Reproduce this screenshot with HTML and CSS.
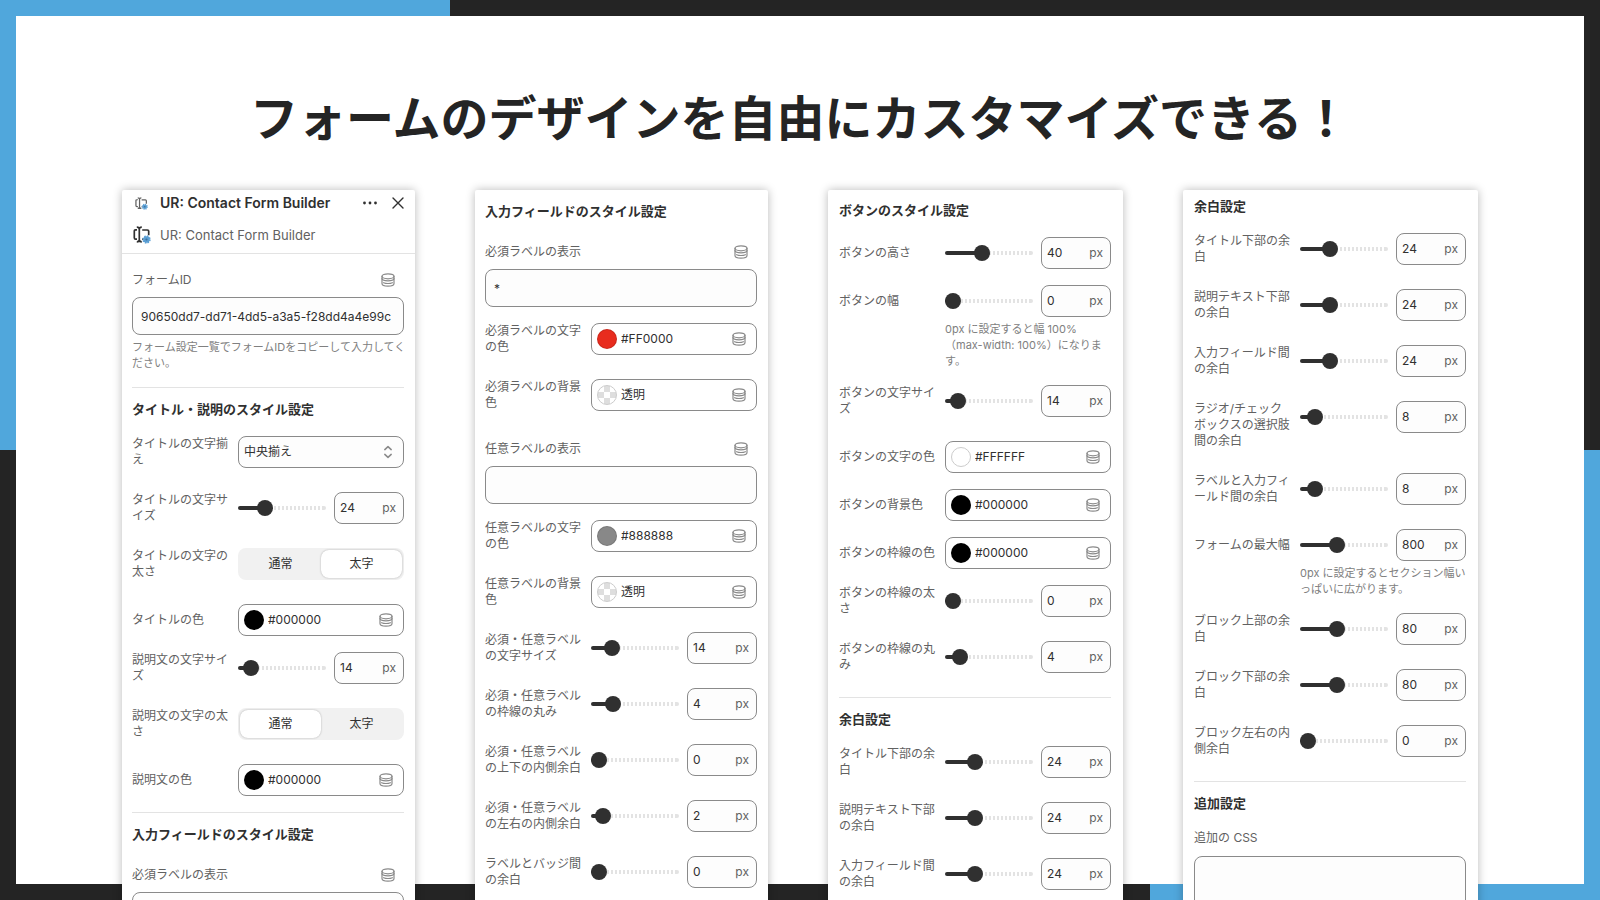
FILE: index.html
```html
<!DOCTYPE html>
<html lang="ja">
<head>
<meta charset="utf-8">
<meta name="viewport" content="width=device-width, initial-scale=1">
<title>フォームのデザインを自由にカスタマイズできる！</title>
<link rel="stylesheet" href="styles.css">
</head>
<body>
<svg class="sprite" aria-hidden="true">
  <symbol id="i-db" viewBox="0 0 16 16">
    <g fill="none" stroke="currentColor" stroke-width="1.2" stroke-linecap="round">
      <ellipse cx="8" cy="4.300" rx="6" ry="2.500"/>
      <path d="M2 4.300v7.200c0 1.700 2.400 2.700 6 2.700s6-1 6-2.700V4.300"/>
      <path d="M2 6.600c.3 1.400 2.600 2.200 6 2.200s5.700-.8 6-2.200"/>
      <path d="M3.600 10.700c1.100.5 2.600.8 4.400.8s3.300-.3 4.400-.8"/>
    </g>
  </symbol>
  <symbol id="i-app" viewBox="0 0 18 18">
    <g fill="none" stroke="currentColor" stroke-width="1.700">
      <path d="M4 3.800H2.600Q1.300 3.800 1.300 5.200v6.600Q1.300 13.200 2.600 13.200H4"/>
      <path d="M3.800 1.200Q6.300 1.200 6.300 3.200Q6.300 1.200 8.800 1.200M6.300 3v11M3.800 15.800Q6.300 15.800 6.300 13.800Q6.300 15.800 8.800 15.800"/>
      <path d="M9.200 4h5.200q1.300 0 1.300 1.300v4M9.200 13.200h1.300"/>
    </g>
    <circle cx="13.500" cy="13.500" r="3.200" fill="#5b9fd4"/>
    <circle cx="13.500" cy="13.500" r="3.400" fill="none" stroke="#5b9fd4" stroke-width="1.600" stroke-dasharray="1.500 1.170"/>
    <circle cx="13.500" cy="13.500" r="1.100" fill="#3c6f9c"/>
  </symbol>
  <symbol id="i-updown" viewBox="0 0 10 14">
    <path d="M1.800 4.600 5 1.600l3.200 3M1.800 9.400 5 12.400l3.200-3" fill="none" stroke="currentColor" stroke-width="1.500" stroke-linecap="round" stroke-linejoin="round"/>
  </symbol>
  <symbol id="i-dots" viewBox="0 0 16 4">
    <g fill="currentColor"><circle cx="2.500" cy="2" r="1.400"/><circle cx="8" cy="2" r="1.400"/><circle cx="13.500" cy="2" r="1.400"/></g>
  </symbol>
  <symbol id="i-close" viewBox="0 0 12 12">
    <path d="M1 1l10 10M11 1 1 11" fill="none" stroke="currentColor" stroke-width="1.400" stroke-linecap="round"/>
  </symbol>
</svg>

<main class="slide">
  <h1 class="slide__title">フォームのデザインを自由にカスタマイズできる！</h1>
  <div class="panels">

    <article class="panel panel--app">
      <header class="app">
        <div class="app__bar">
          <svg class="app__icon app__icon--small"><use href="#i-app"/></svg>
          <h2 class="app__name">UR: Contact Form Builder</h2>
          <button class="icon-btn" type="button" aria-label="その他"><svg class="icon-dots"><use href="#i-dots"/></svg></button>
          <button class="icon-btn" type="button" aria-label="閉じる"><svg class="icon-close"><use href="#i-close"/></svg></button>
        </div>
        <div class="app__sub">
          <svg class="app__icon"><use href="#i-app"/></svg>
          <span>UR: Contact Form Builder</span>
        </div>
      </header>
      <section class="section">
        <div class="field">
          <div class="field__head"><label for="form-id">フォームID</label><button class="icon-btn" type="button" aria-label="動的ソース"><svg class="icon-db"><use href="#i-db"/></svg></button></div>
          <input class="text-input" id="form-id" type="text" value="90650dd7-dd71-4dd5-a3a5-f28dd4a4e99c">
          <p class="help help--wide">フォーム設定一覧でフォームIDをコピーして入力してください。</p>
        </div>
      </section>
      <section class="section">
        <h3 class="section__title">タイトル・説明のスタイル設定</h3>
        <div class="row">
          <label class="row__label row__label--multi" for="t-align">タイトルの文字揃え</label>
          <div class="select"><select id="t-align"><option>中央揃え</option></select><svg class="icon-updown"><use href="#i-updown"/></svg></div>
        </div>
        <div class="row">
          <label class="row__label row__label--multi" for="t-size">タイトルの文字サイズ</label>
          <div class="range"><input class="slider" type="range" aria-label="タイトルの文字サイズ" min="8" max="68" value="24" style="--fill:.267"><span class="number"><input id="t-size" type="number" value="24"><span>px</span></span></div>
        </div>
        <div class="row">
          <span class="row__label row__label--multi" id="t-weight">タイトルの文字の太さ</span>
          <div class="segment" role="radiogroup" aria-labelledby="t-weight">
            <label><input type="radio" name="tw"><span>通常</span></label>
            <label><input type="radio" name="tw" checked><span>太字</span></label>
          </div>
        </div>
        <div class="row">
          <label class="row__label" for="t-color">タイトルの色</label>
          <div class="color"><button class="swatch swatch--black" type="button" aria-label="色を選択"></button><input id="t-color" type="text" value="#000000"><svg class="icon-db"><use href="#i-db"/></svg></div>
        </div>
        <div class="row">
          <label class="row__label row__label--multi" for="d-size">説明文の文字サイズ</label>
          <div class="range"><input class="slider" type="range" aria-label="説明文の文字サイズ" min="10" max="66" value="14" style="--fill:.071"><span class="number"><input id="d-size" type="number" value="14"><span>px</span></span></div>
        </div>
        <div class="row">
          <span class="row__label row__label--multi" id="d-weight">説明文の文字の太さ</span>
          <div class="segment" role="radiogroup" aria-labelledby="d-weight">
            <label><input type="radio" name="dw" checked><span>通常</span></label>
            <label><input type="radio" name="dw"><span>太字</span></label>
          </div>
        </div>
        <div class="row">
          <label class="row__label" for="d-color">説明文の色</label>
          <div class="color"><button class="swatch swatch--black" type="button" aria-label="色を選択"></button><input id="d-color" type="text" value="#000000"><svg class="icon-db"><use href="#i-db"/></svg></div>
        </div>
      </section>
      <section class="section">
        <h3 class="section__title">入力フィールドのスタイル設定</h3>
        <div class="field">
          <div class="field__head"><label for="req-a">必須ラベルの表示</label><button class="icon-btn" type="button" aria-label="動的ソース"><svg class="icon-db"><use href="#i-db"/></svg></button></div>
          <input class="text-input" id="req-a" type="text">
        </div>
      </section>
    </article>

    <article class="panel panel--fields">
      <section class="section">
        <h3 class="section__title">入力フィールドのスタイル設定</h3>
        <div class="field">
          <div class="field__head"><label for="req">必須ラベルの表示</label><button class="icon-btn" type="button" aria-label="動的ソース"><svg class="icon-db"><use href="#i-db"/></svg></button></div>
          <input class="text-input" id="req" type="text" value="*">
        </div>
        <div class="row">
          <label class="row__label row__label--multi" for="req-color">必須ラベルの文字の色</label>
          <div class="color"><button class="swatch swatch--red" type="button" aria-label="色を選択"></button><input id="req-color" type="text" value="#FF0000"><svg class="icon-db"><use href="#i-db"/></svg></div>
        </div>
        <div class="row">
          <label class="row__label row__label--multi" for="req-bg">必須ラベルの背景色</label>
          <div class="color"><button class="swatch swatch--clear" type="button" aria-label="色を選択"></button><input id="req-bg" type="text" value="透明"><svg class="icon-db"><use href="#i-db"/></svg></div>
        </div>
        <div class="field">
          <div class="field__head"><label for="opt">任意ラベルの表示</label><button class="icon-btn" type="button" aria-label="動的ソース"><svg class="icon-db"><use href="#i-db"/></svg></button></div>
          <input class="text-input" id="opt" type="text">
        </div>
        <div class="row">
          <label class="row__label row__label--multi" for="opt-color">任意ラベルの文字の色</label>
          <div class="color"><button class="swatch swatch--gray" type="button" aria-label="色を選択"></button><input id="opt-color" type="text" value="#888888"><svg class="icon-db"><use href="#i-db"/></svg></div>
        </div>
        <div class="row">
          <label class="row__label row__label--multi" for="opt-bg">任意ラベルの背景色</label>
          <div class="color"><button class="swatch swatch--clear" type="button" aria-label="色を選択"></button><input id="opt-bg" type="text" value="透明"><svg class="icon-db"><use href="#i-db"/></svg></div>
        </div>
        <div class="row">
          <label class="row__label row__label--multi" for="l-size">必須・任意ラベルの文字サイズ</label>
          <div class="range"><input class="slider" type="range" aria-label="必須・任意ラベルの文字サイズ" min="10" max="32" value="14" style="--fill:.182"><span class="number"><input id="l-size" type="number" value="14"><span>px</span></span></div>
        </div>
        <div class="row">
          <label class="row__label row__label--multi" for="l-radius">必須・任意ラベルの枠線の丸み</label>
          <div class="range"><input class="slider" type="range" aria-label="必須・任意ラベルの枠線の丸み" min="0" max="20" value="4" style="--fill:.2"><span class="number"><input id="l-radius" type="number" value="4"><span>px</span></span></div>
        </div>
        <div class="row">
          <label class="row__label row__label--multi" for="l-py">必須・任意ラベルの上下の内側余白</label>
          <div class="range"><input class="slider" type="range" aria-label="必須・任意ラベルの上下の内側余白" min="0" max="40" value="0" style="--fill:0"><span class="number"><input id="l-py" type="number" value="0"><span>px</span></span></div>
        </div>
        <div class="row">
          <label class="row__label row__label--multi" for="l-px">必須・任意ラベルの左右の内側余白</label>
          <div class="range"><input class="slider" type="range" aria-label="必須・任意ラベルの左右の内側余白" min="0" max="40" value="2" style="--fill:.05"><span class="number"><input id="l-px" type="number" value="2"><span>px</span></span></div>
        </div>
        <div class="row">
          <label class="row__label row__label--multi" for="l-gap">ラベルとバッジ間の余白</label>
          <div class="range"><input class="slider" type="range" aria-label="ラベルとバッジ間の余白" min="0" max="40" value="0" style="--fill:0"><span class="number"><input id="l-gap" type="number" value="0"><span>px</span></span></div>
        </div>
      </section>
    </article>

    <article class="panel panel--button">
      <section class="section">
        <h3 class="section__title">ボタンのスタイル設定</h3>
        <div class="row">
          <label class="row__label" for="b-h">ボタンの高さ</label>
          <div class="range"><input class="slider" type="range" aria-label="ボタンの高さ" min="0" max="100" value="40" style="--fill:.4"><span class="number"><input id="b-h" type="number" value="40"><span>px</span></span></div>
        </div>
        <div class="row">
          <label class="row__label" for="b-w">ボタンの幅</label>
          <div class="control">
            <div class="range"><input class="slider" type="range" aria-label="ボタンの幅" min="0" max="800" value="0" style="--fill:0"><span class="number"><input id="b-w" type="number" value="0"><span>px</span></span></div>
            <p class="help">0px に設定すると幅 100%（max-width: 100%）になります。</p>
          </div>
        </div>
        <div class="row">
          <label class="row__label row__label--multi" for="b-size">ボタンの文字サイズ</label>
          <div class="range"><input class="slider" type="range" aria-label="ボタンの文字サイズ" min="10" max="66" value="14" style="--fill:.071"><span class="number"><input id="b-size" type="number" value="14"><span>px</span></span></div>
        </div>
        <div class="row">
          <label class="row__label" for="b-color">ボタンの文字の色</label>
          <div class="color"><button class="swatch swatch--white" type="button" aria-label="色を選択"></button><input id="b-color" type="text" value="#FFFFFF"><svg class="icon-db"><use href="#i-db"/></svg></div>
        </div>
        <div class="row">
          <label class="row__label" for="b-bg">ボタンの背景色</label>
          <div class="color"><button class="swatch swatch--black" type="button" aria-label="色を選択"></button><input id="b-bg" type="text" value="#000000"><svg class="icon-db"><use href="#i-db"/></svg></div>
        </div>
        <div class="row">
          <label class="row__label" for="b-bc">ボタンの枠線の色</label>
          <div class="color"><button class="swatch swatch--black" type="button" aria-label="色を選択"></button><input id="b-bc" type="text" value="#000000"><svg class="icon-db"><use href="#i-db"/></svg></div>
        </div>
        <div class="row">
          <label class="row__label row__label--multi" for="b-bw">ボタンの枠線の太さ</label>
          <div class="range"><input class="slider" type="range" aria-label="ボタンの枠線の太さ" min="0" max="20" value="0" style="--fill:0"><span class="number"><input id="b-bw" type="number" value="0"><span>px</span></span></div>
        </div>
        <div class="row">
          <label class="row__label row__label--multi" for="b-r">ボタンの枠線の丸み</label>
          <div class="range"><input class="slider" type="range" aria-label="ボタンの枠線の丸み" min="0" max="40" value="4" style="--fill:.1"><span class="number"><input id="b-r" type="number" value="4"><span>px</span></span></div>
        </div>
      </section>
      <section class="section">
        <h3 class="section__title">余白設定</h3>
        <div class="row">
          <label class="row__label row__label--multi" for="m1">タイトル下部の余白</label>
          <div class="range"><input class="slider" type="range" aria-label="タイトル下部の余白" min="0" max="80" value="24" style="--fill:.3"><span class="number"><input id="m1" type="number" value="24"><span>px</span></span></div>
        </div>
        <div class="row">
          <label class="row__label row__label--multi" for="m2">説明テキスト下部の余白</label>
          <div class="range"><input class="slider" type="range" aria-label="説明テキスト下部の余白" min="0" max="80" value="24" style="--fill:.3"><span class="number"><input id="m2" type="number" value="24"><span>px</span></span></div>
        </div>
        <div class="row">
          <label class="row__label row__label--multi" for="m3">入力フィールド間の余白</label>
          <div class="range"><input class="slider" type="range" aria-label="入力フィールド間の余白" min="0" max="80" value="24" style="--fill:.3"><span class="number"><input id="m3" type="number" value="24"><span>px</span></span></div>
        </div>
      </section>
    </article>

    <article class="panel panel--spacing">
      <section class="section">
        <h3 class="section__title">余白設定</h3>
        <div class="row">
          <label class="row__label row__label--multi" for="s1">タイトル下部の余白</label>
          <div class="range"><input class="slider" type="range" aria-label="タイトル下部の余白" min="0" max="80" value="24" style="--fill:.3"><span class="number"><input id="s1" type="number" value="24"><span>px</span></span></div>
        </div>
        <div class="row">
          <label class="row__label row__label--multi" for="s2">説明テキスト下部の余白</label>
          <div class="range"><input class="slider" type="range" aria-label="説明テキスト下部の余白" min="0" max="80" value="24" style="--fill:.3"><span class="number"><input id="s2" type="number" value="24"><span>px</span></span></div>
        </div>
        <div class="row">
          <label class="row__label row__label--multi" for="s3">入力フィールド間の余白</label>
          <div class="range"><input class="slider" type="range" aria-label="入力フィールド間の余白" min="0" max="80" value="24" style="--fill:.3"><span class="number"><input id="s3" type="number" value="24"><span>px</span></span></div>
        </div>
        <div class="row">
          <label class="row__label row__label--multi" for="s4">ラジオ/チェックボックスの選択肢間の余白</label>
          <div class="range"><input class="slider" type="range" aria-label="ラジオ/チェックボックスの選択肢間の余白" min="0" max="80" value="8" style="--fill:.1"><span class="number"><input id="s4" type="number" value="8"><span>px</span></span></div>
        </div>
        <div class="row">
          <label class="row__label row__label--multi" for="s5">ラベルと入力フィールド間の余白</label>
          <div class="range"><input class="slider" type="range" aria-label="ラベルと入力フィールド間の余白" min="0" max="80" value="8" style="--fill:.1"><span class="number"><input id="s5" type="number" value="8"><span>px</span></span></div>
        </div>
        <div class="row">
          <label class="row__label" for="s6">フォームの最大幅</label>
          <div class="control">
            <div class="range"><input class="slider" type="range" aria-label="フォームの最大幅" min="0" max="2000" value="800" style="--fill:.4"><span class="number"><input id="s6" type="number" value="800"><span>px</span></span></div>
            <p class="help">0px に設定するとセクション幅いっぱいに広がります。</p>
          </div>
        </div>
        <div class="row">
          <label class="row__label row__label--multi" for="s7">ブロック上部の余白</label>
          <div class="range"><input class="slider" type="range" aria-label="ブロック上部の余白" min="0" max="200" value="80" style="--fill:.4"><span class="number"><input id="s7" type="number" value="80"><span>px</span></span></div>
        </div>
        <div class="row">
          <label class="row__label row__label--multi" for="s8">ブロック下部の余白</label>
          <div class="range"><input class="slider" type="range" aria-label="ブロック下部の余白" min="0" max="200" value="80" style="--fill:.4"><span class="number"><input id="s8" type="number" value="80"><span>px</span></span></div>
        </div>
        <div class="row">
          <label class="row__label row__label--multi" for="s9">ブロック左右の内側余白</label>
          <div class="range"><input class="slider" type="range" aria-label="ブロック左右の内側余白" min="0" max="200" value="0" style="--fill:0"><span class="number"><input id="s9" type="number" value="0"><span>px</span></span></div>
        </div>
      </section>
      <section class="section">
        <h3 class="section__title">追加設定</h3>
        <div class="field field--plain">
          <div class="field__head"><label for="css">追加の CSS</label></div>
          <textarea class="text-input text-input--area" id="css"></textarea>
        </div>
      </section>
    </article>

  </div>
</main>
</body>
</html>
```
FILE: styles.css
```css
:root {
  --blue: #50a7dc;
  --dark: #242424;
  --ink: #303030;
  --muted: #616161;
  --line: #8a8a8a;
  --rule: #e3e3e3;
}

* { box-sizing: border-box; }

html { height: 100%; }

body {
  margin: 0;
  height: 100%;
  padding: 16px;
  overflow: hidden;
  background:
    linear-gradient(var(--blue), var(--blue)) 0 0 / 450px 50% no-repeat,
    linear-gradient(var(--blue), var(--blue)) 100% 100% / 450px 50% no-repeat,
    var(--dark);
  color: var(--ink);
  font-family: Inter, "Noto Sans CJK JP", sans-serif;
  font-size: 12px;
  line-height: 16px;
}

h1, h2, h3, p { margin: 0; }

button, input, select, textarea {
  margin: 0;
  padding: 0;
  border: 0;
  background: none;
  color: inherit;
  font: inherit;
}

.sprite { position: absolute; width: 0; height: 0; }

.slide {
  height: 100%;
  padding: 63px 106px 0;
  background: #fff;
}

.slide__title {
  color: var(--dark);
  font-family: "Noto Sans CJK JP", sans-serif;
  font-size: 48px;
  font-weight: 700;
  line-height: 72px;
  text-align: center;
}

.panels {
  display: grid;
  grid-template-columns: 293fr 293fr 295fr 295fr;
  gap: 60px;
  margin-top: 39px;
}

.panel {
  padding: 0 11px 0 10px;
  border-radius: 2px;
  background: #fff;
  box-shadow: 0 0 10px rgba(0, 0, 0, .28);
}
.panel--fields { padding-top: 12px; }
.panel--button { padding: 11px 12px 0 11px; }
.panel--spacing { padding: 7px 12px 0 11px; }

/* App header */
.app {
  margin: 0 -11px 0 -10px;
  padding: 3px 11px 8px 10px;
  border-bottom: 1px solid var(--rule);
}
.app__bar,
.app__sub { display: flex; align-items: center; }
.app__bar { height: 20px; }
.app__sub {
  height: 20px;
  margin-top: 12px;
  color: var(--muted);
  font-size: 13px;
}
.app__icon { width: 18px; height: 18px; margin: 0 9px 0 1px; color: var(--ink); }
.app__icon--small { width: 13px; height: 13px; margin: 0 12px 0 3px; color: var(--muted); }
.app__name { flex: 1; font-size: 14px; font-weight: 600; line-height: 20px; }
.icon-btn { display: flex; margin-left: 14px; }
.icon-dots { width: 16px; height: 4px; }
.icon-close { width: 12px; height: 12px; }

/* Sections */
.section { display: grid; gap: 16px; padding-bottom: 16px; }
.section + .section { padding-top: 12px; border-top: 1px solid var(--rule); }
.app + .section { padding-top: 12px; }
.section__title { padding-bottom: 2px; font-size: 13px; font-weight: 600; line-height: 18px; }

.field { padding-top: 4px; }
.field__head {
  display: flex;
  align-items: center;
  justify-content: space-between;
  height: 20px;
  margin-bottom: 7px;
  padding-right: 8px;
  color: var(--muted);
}
.field--plain { padding-top: 0; }
.field--plain .field__head { height: 16px; margin-bottom: 10px; }

.text-input {
  display: block;
  width: 100%;
  height: 38px;
  padding: 0 8px;
  border: 1px solid var(--line);
  border-radius: 8px;
  background: #fdfdfd;
}
.text-input--area { height: 120px; resize: none; }

.help {
  margin-top: 4px;
  color: #808080;
  font-size: 11px;
  line-height: 16px;
  line-break: loose;
}
.help--wide { margin-right: -6px; }

/* Setting rows */
.row {
  display: grid;
  grid-template-columns: minmax(0, 1fr) 166px;
  column-gap: 6px;
  align-items: start;
}
.row__label { padding: 8px 0; color: var(--muted); line-break: anywhere; }
.row__label--multi { padding: 0 0 8px; }

.select,
.color,
.number {
  display: flex;
  align-items: center;
  height: 32px;
  border: 1px solid var(--line);
  border-radius: 8px;
  background: #fdfdfd;
}

.select select {
  flex: 1;
  height: 100%;
  padding-left: 5px;
  appearance: none;
  outline: 0;
}
.icon-updown { width: 10px; height: 14px; margin-right: 10px; color: var(--line); }

.color { padding: 0 9px 0 5px; background: #fff; }
.color input { flex: 1; min-width: 0; padding-left: 4px; }
.icon-db { width: 16px; height: 16px; color: var(--line); }

.swatch {
  width: 20px;
  height: 20px;
  border: 1px solid rgba(0, 0, 0, .12);
  border-radius: 50%;
}
.swatch--black { background: #000; }
.swatch--red { background: #e82c1e; }
.swatch--gray { background: #888; }
.swatch--white { border-color: #ccc; background: #fff; }
.swatch--clear {
  border-color: #ccc;
  background: repeating-conic-gradient(#fff 0 25%, #dedede 0 50%) 0 6px / 12px 12px;
}

.range { display: grid; grid-template-columns: 1fr 70px; gap: 8px; align-items: center; }

.slider {
  width: 100%;
  height: 16px;
  appearance: none;
}
.slider::-webkit-slider-runnable-track {
  height: 4px;
  border-radius: 2px;
  background:
    linear-gradient(var(--ink), var(--ink)) 0 0 / calc(8px + (100% - 16px) * var(--fill)) 100% no-repeat,
    linear-gradient(#e3e3e3, #e3e3e3) 100% 0 / 4px 100% no-repeat,
    repeating-linear-gradient(90deg, #e3e3e3 0 2px, transparent 2px 4px);
}
.slider::-webkit-slider-thumb {
  width: 16px;
  height: 16px;
  margin-top: -6px;
  border-radius: 50%;
  background: var(--ink);
  appearance: none;
}

.number { padding: 0 7px 0 5px; }
.number input { flex: 1; min-width: 0; appearance: textfield; }
.number input::-webkit-inner-spin-button { appearance: none; margin: 0; }
.number span { color: var(--muted); }

.segment {
  display: grid;
  grid-template-columns: 1fr 1fr;
  height: 32px;
  padding: 2px;
  border-radius: 8px;
  background: #f1f1f1;
}
.segment label { display: grid; }
.segment input { grid-area: 1 / 1; appearance: none; }
.segment span {
  display: grid;
  grid-area: 1 / 1;
  place-items: center;
  border-radius: 8px;
}
.segment input:checked + span {
  background: #fff;
  box-shadow: 0 0 2px rgba(0, 0, 0, .3);
}
```
